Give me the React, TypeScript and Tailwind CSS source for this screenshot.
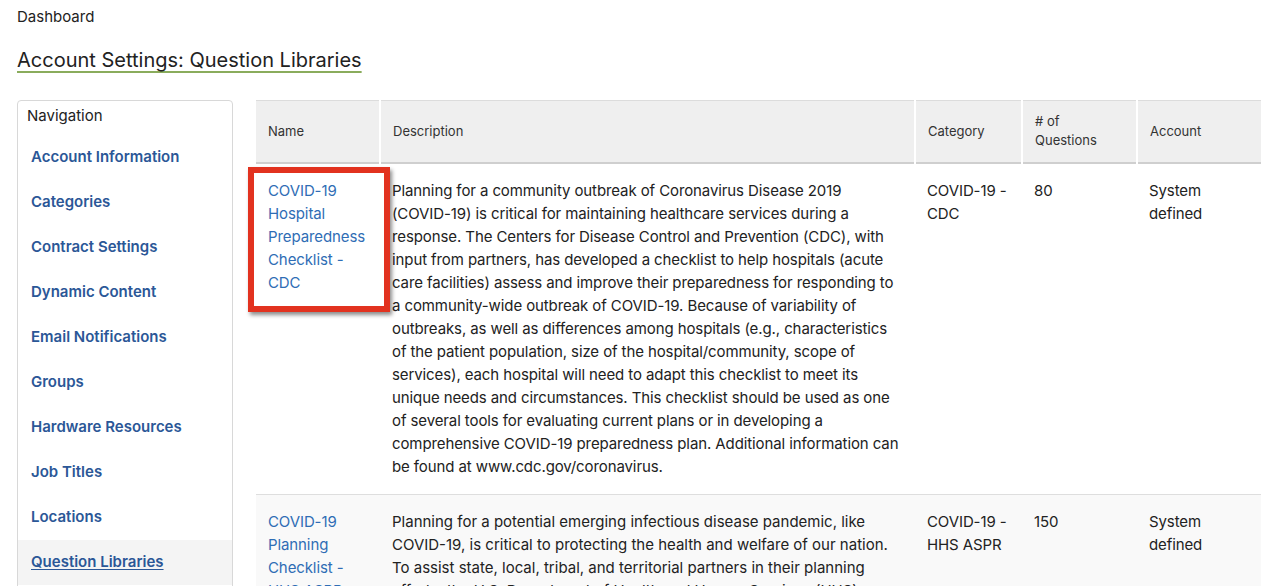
import React from 'react'

const navItems = [
  'Account Information',
  'Categories',
  'Contract Settings',
  'Dynamic Content',
  'Email Notifications',
  'Groups',
  'Hardware Resources',
  'Job Titles',
  'Locations',
  'Question Libraries',
]

const rows = [
  {
    name: 'COVID-19 Hospital Preparedness Checklist - CDC',
    description:
      'Planning for a community outbreak of Coronavirus Disease 2019 (COVID-19) is critical for maintaining healthcare services during a response. The Centers for Disease Control and Prevention (CDC), with input from partners, has developed a checklist to help hospitals (acute care facilities) assess and improve their preparedness for responding to a community-wide outbreak of COVID-19. Because of variability of outbreaks, as well as differences among hospitals (e.g., characteristics of the patient population, size of the hospital/community, scope of services), each hospital will need to adapt this checklist to meet its unique needs and circumstances. This checklist should be used as one of several tools for evaluating current plans or in developing a comprehensive COVID-19 preparedness plan. Additional information can be found at www.cdc.gov/coronavirus.',
    category: 'COVID-19 - CDC',
    count: '80',
    highlight: true,
  },
  {
    name: 'COVID-19 Planning Checklist - HHS ASPR',
    description:
      'Planning for a potential emerging infectious disease pandemic, like COVID-19, is critical to protecting the health and welfare of our nation. To assist state, local, tribal, and territorial partners in their planning efforts, the U.S. Department of Health and Human Services (HHS) Office of the Assistant Secretary for Preparedness and Response has developed this checklist.',
    category: 'COVID-19 - HHS ASPR',
    count: '150',
    highlight: false,
  },
]

export default function App() {
  return (
    <div className="h-[586px] overflow-hidden bg-white pl-[17px] pr-[18px] font-['Inter',sans-serif] text-[#222]">
      <div className="pt-[8px] text-[15px] leading-[18px]">Dashboard</div>
      <h1 className="mt-[21px] text-[20px] leading-[26px] underline decoration-[#8aac5c] decoration-2 underline-offset-[4px]">
        Account Settings: Question Libraries
      </h1>

      <div className="mt-[27px] flex gap-[23px]">
        {/* Sidebar */}
        <div className="w-[216px] shrink-0 rounded-t-[4px] border border-[#d8d8d8] pb-10">
          <div className="px-[9px] pt-[5px] text-[15px] leading-[20px]">Navigation</div>
          <ul className="mt-[9px]">
            {navItems.map((item) => {
              const active = item === 'Question Libraries'
              return (
                <li
                  key={item}
                  className={`flex h-[45px] items-center px-[13px] text-[15px] font-semibold text-[#2b5797] ${
                    active ? 'bg-[#f4f4f4] underline underline-offset-2' : ''
                  }`}
                >
                  {item}
                </li>
              )
            })}
          </ul>
        </div>

        {/* Table */}
        <div className="flex-1">
          <table className="w-full table-fixed border-collapse text-left">
            <colgroup>
              <col className="w-[124px]" />
              <col className="w-[535px]" />
              <col className="w-[107px]" />
              <col className="w-[115px]" />
              <col className="w-[124px]" />
            </colgroup>
            <thead>
              <tr className="h-[62px] border-t border-b-2 border-t-[#dcdcdc] border-b-[#cfcfcf] bg-[#efefef] text-[13px] leading-[19px] text-[#333]">
                <th className="px-3 font-normal">Name</th>
                <th className="border-l-2 border-white px-3 font-normal">Description</th>
                <th className="border-l-2 border-white px-3 font-normal">Category</th>
                <th className="border-l-2 border-white px-3 font-normal">
                  # of
                  <br />
                  Questions
                </th>
                <th className="border-l-2 border-white px-3 font-normal">Account</th>
              </tr>
            </thead>
            <tbody className="text-[15px] leading-[23px] tracking-[-0.1px]">
              {rows.map((row, i) => (
                <tr
                  key={row.name}
                  className={`border-b border-[#dedede] align-top ${i % 2 === 1 ? 'bg-[#f9f9f9]' : ''}`}
                >
                  <td className="relative px-3 pb-4 pt-[15px] text-[#2f6db5]">
                    {row.highlight && (
                      <div className="absolute left-[-8px] top-[3px] h-[145px] w-[142px] border-[6px] border-[#e2321f] shadow-[2px_3px_4px_rgba(0,0,0,0.45)]" />
                    )}
                    <span className="relative">{row.name}</span>
                  </td>
                  <td
                    className={`pb-4 pl-3 pt-[15px] text-[#222] ${
                      row.highlight ? 'pr-3' : 'pr-4 tracking-normal'
                    }`}
                  >
                    {row.description}
                  </td>
                  <td className="px-3 pb-4 pt-[15px]">{row.category}</td>
                  <td className="px-3 pb-4 pt-[15px]">{row.count}</td>
                  <td className="px-3 pb-4 pt-[15px]">
                    System
                    <br />
                    defined
                  </td>
                </tr>
              ))}
            </tbody>
          </table>
        </div>
      </div>
    </div>
  )
}
